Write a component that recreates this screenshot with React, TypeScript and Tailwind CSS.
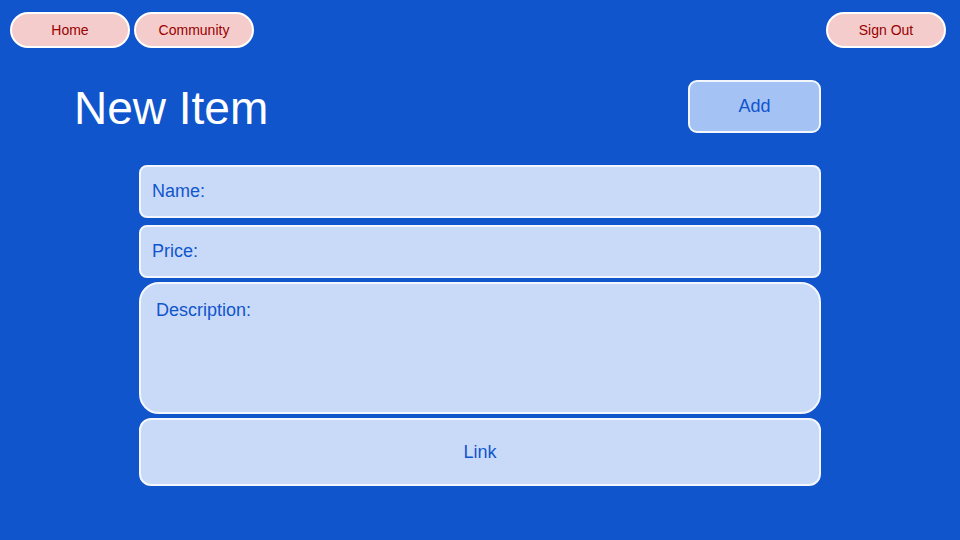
import React from 'react';

export default function App() {
  const navPill =
    'w-[120px] h-[36px] rounded-full border-2 border-white bg-[#f4cccc] text-[#990000] text-[14px] flex items-center justify-center';
  const field =
    'w-full border-2 border-[#f3f6fc] bg-[#c9daf8] text-[#1155cc] text-[18px]';

  return (
    <div
      className="w-[960px] h-[540px] bg-[#1155cc] overflow-hidden"
      style={{ fontFamily: '"Liberation Sans", Arial, sans-serif' }}
    >
      {/* Top nav */}
      <div className="flex items-center justify-between pt-[12px] pl-[10px] pr-[14px]">
        <div className="flex gap-[4px]">
          <button className={navPill}>Home</button>
          <button className={navPill}>Community</button>
        </div>
        <button className={navPill}>Sign Out</button>
      </div>

      {/* Header */}
      <div className="flex items-start justify-between pl-[74px] pr-[139px] mt-[32px]">
        <h1 className="text-[46px] leading-[46px] text-white mt-[5px]">New Item</h1>
        <button className="w-[133px] h-[53px] rounded-[9px] border-2 border-[#f3f6fc] bg-[#a4c2f4] text-[#1155cc] text-[18px] flex items-center justify-center">
          Add
        </button>
      </div>

      {/* Form */}
      <div className="flex flex-col pl-[139px] pr-[139px] mt-[32px]">
        <div className={`${field} h-[53px] rounded-[8px] flex items-center px-[11px]`}>Name:</div>
        <div className={`${field} h-[53px] rounded-[8px] flex items-center px-[11px] mt-[7px]`}>Price:</div>
        <div className={`${field} h-[132px] rounded-[20px] px-[15px] pt-[13px] mt-[4px]`}>Description:</div>
        <div className={`${field} h-[68px] rounded-[12px] flex items-center justify-center mt-[4px]`}>Link</div>
      </div>
    </div>
  );
}
